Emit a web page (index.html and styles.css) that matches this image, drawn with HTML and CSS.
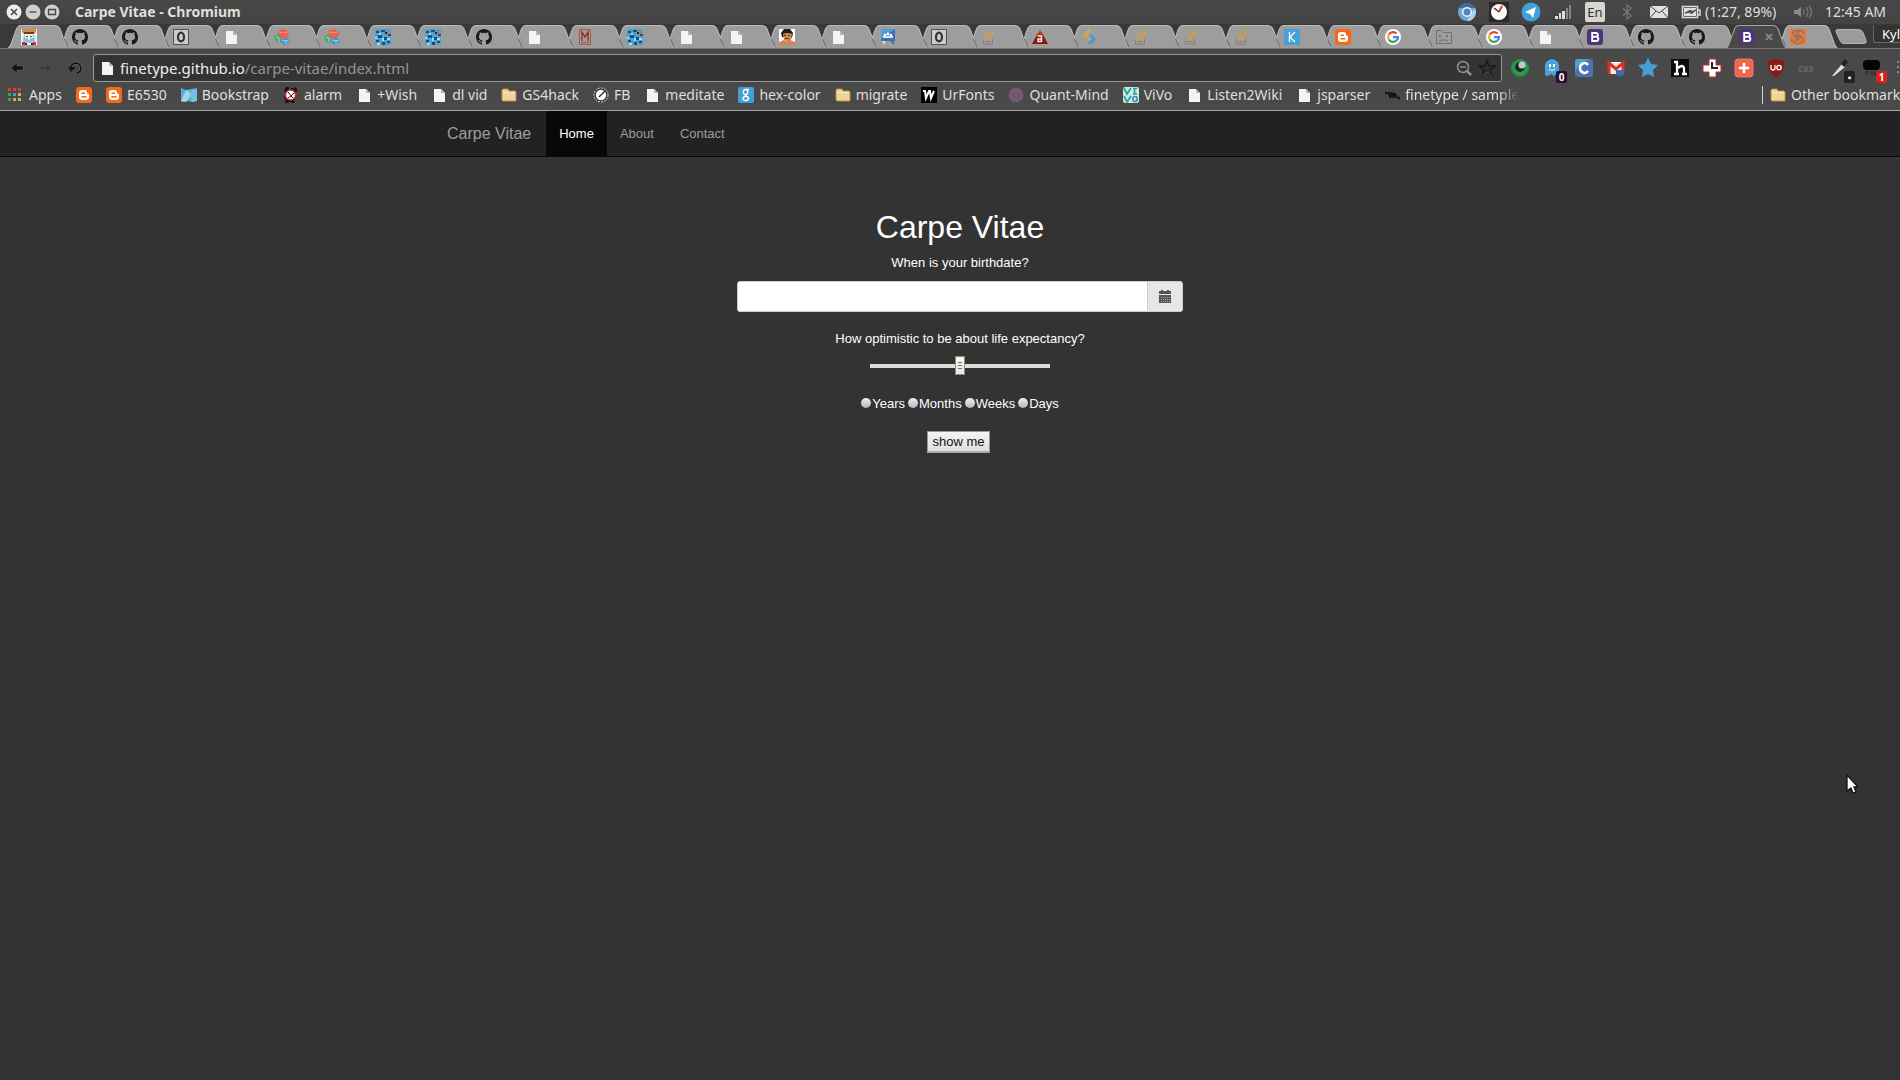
FILE: index.html
```html
<!DOCTYPE html>
<html lang="en">
<head>
<meta charset="utf-8">
<title>Carpe Vitae</title>
<link rel="stylesheet" href="styles.css">
</head>
<body>
<svg class="sprite" aria-hidden="true">
  <defs>
    <linearGradient id="orange-red" x1="0" y1="0" x2="0" y2="1"><stop offset="0" stop-color="#f0701c"/><stop offset=".5" stop-color="#8e1410"/></linearGradient>
    <radialGradient id="green-ball"><stop offset=".4" stop-color="#37a35b"/><stop offset="1" stop-color="#1f8c46"/></radialGradient>
  </defs>
  <symbol id="shape-first" viewBox="0 0 60 23" preserveAspectRatio="none"><path d="M0 23C2 22 2 21 3 19L8 5C9 2 10 .5 13 .5H46C49 .5 51 2 52 5L57 19C58 21 58 22 60 23Z" fill="#9d9d9d"/><path d="M0 23C2 22 2 21 3 19L8 5C9 2 10 .5 13 .5H46C49 .5 51 2 52 5L57 19C58 21 58 22 60 23" fill="none" stroke="#bbb"/></symbol>
  <symbol id="shape" viewBox="0 0 60 23" preserveAspectRatio="none"><path d="M9 23L5 14L8 5C9 2 10 .5 13 .5H46C49 .5 51 2 52 5L57 19C58 21 58 22 60 23Z" fill="#9d9d9d"/><path d="M9 22L4.500 12" stroke="#707070" fill="none"/><path d="M5 14L8 5C9 2 10 .5 13 .5H46C49 .5 51 2 52 5L57 19C58 21 58 22 60 23" fill="none" stroke="#bbb"/></symbol>
  <symbol id="shape-on" viewBox="0 0 60 23" preserveAspectRatio="none"><path d="M-1 24C2 22 2 21 3 19L8 5C9 2 10 .5 13 .5H46C49 .5 51 2 52 5L57 19C58 21 58 22 60 24Z" fill="#494949"/><path d="M0 23C2 22 2 21 3 19L8 5C9 2 10 .5 13 .5H46C49 .5 51 2 52 5L57 19C58 21 58 22 60 23" fill="none" stroke="#a5a5a5"/></symbol>

  <symbol id="king" viewBox="0 0 16 16"><path d="M0 0h16v16H0z" fill="#e9eef0"/><path d="M1 0h14v3l-2 2H3L1 3z" fill="#c99148"/><path d="M3 3h10v2H3z" fill="#7c3b17"/><path d="M3 6h10l1 6-3 2H5l-3-2z" fill="#8fbedb"/><path d="M4 6h8v3H9v2H7V9H4z" fill="#f3f0ec"/><path d="M5 7h2v1H5zM9 7h2v1H9z" fill="#555"/><path d="M1 13h3v3H1zM12 13h3v3h-3z" fill="#d0301c"/><path d="M4 14h2v2H4zM10 14h2v2h-2z" fill="#352a20"/></symbol>
  <symbol id="github" viewBox="0 0 16 16"><path fill="#191919" d="M8 0C3.58 0 0 3.58 0 8c0 3.54 2.29 6.53 5.47 7.59.4.07.55-.17.55-.38 0-.19-.01-.82-.01-1.49-2.01.37-2.53-.49-2.69-.94-.09-.23-.48-.94-.82-1.13-.28-.15-.68-.52-.01-.53.63-.01 1.08.58 1.23.82.72 1.21 1.87.87 2.33.66.07-.52.28-.87.51-1.07-1.78-.2-3.64-.89-3.64-3.95 0-.87.31-1.59.82-2.15-.08-.2-.36-1.02.08-2.12 0 0 .67-.21 2.2.82a7.6 7.6 0 0 1 4 0c1.53-1.04 2.2-.82 2.2-.82.44 1.1.16 1.92.08 2.12.51.56.82 1.27.82 2.15 0 3.07-1.87 3.75-3.65 3.95.29.25.54.73.54 1.48 0 1.07-.01 1.93-.01 2.2 0 .21.15.46.55.38A8.01 8.01 0 0 0 16 8c0-4.42-3.58-8-8-8z"/></symbol>
  <symbol id="zero" viewBox="0 0 16 16"><path d="M.5.5h15v15H.5z" fill="#ccc" stroke="#505050"/><ellipse cx="8" cy="8" rx="3" ry="4.3" fill="none" stroke="#333" stroke-width="2.2"/></symbol>
  <symbol id="page" viewBox="0 0 16 16"><path d="M3 2h7l4 4v9H3z" fill="#f4f4f4"/><path d="M10 2v4h4z" fill="#b5b5b5"/></symbol>
  <symbol id="cubes" viewBox="0 0 16 16"><path d="M0 7l4-2 3 3v6l-5-1z" fill="#4aa86c"/><path d="M2 8l3 1v4" fill="none" stroke="#a8dcb8"/><path d="M7 10l5-2 4 3-1 3-5 2-3-3z" fill="#4795d4"/><path d="M8 11l4 1 3-1M12 12v3" fill="none" stroke="#a8d0f0"/><path d="M4 2l6-2 5 3-1 5-5 2-4-3z" fill="#e8604f"/><path d="M5 3l5 1 4-1" fill="none" stroke="#f5a090" stroke-width=".8"/></symbol>
  <symbol id="mosaic" viewBox="0 0 16 16"><path d="M0 0h16v16H0z" fill="#4ba3d3"/><path d="M1 2h3v2H1zM6 1h4v2H6zM3 6h4v3H3zM9 8h3v3H9zM13 5h3v2h-3zM1 11h3v2H1zM7 13h3v3H7zM12 12h3v2h-3z" fill="#1c4f7d"/><path d="M4 4h2v2H4zM0 8h2v2H0zM7 9h2v3H7zM2 14h3v2H2zM12 9h3v2h-3z" fill="#a3dceb"/><path d="M12 2h2v3h-2z" fill="#ef6a1b"/><path d="M10 3h2v2h-2z" fill="#222"/></symbol>
  <symbol id="m-red" viewBox="0 0 16 16"><path d="M2.500.5h11v15h-11zM4 13.500h8" fill="none" stroke="#b5533f"/><path d="M5 12V3l3 5 3-5v9" fill="none" stroke="#9b2417" stroke-width="1.3"/></symbol>
  <symbol id="face" viewBox="0 0 16 16"><path d="M0 0h16v16H0z" fill="#fff"/><path d="M3 8L2 4l3-4h6l3 4-1 5z" fill="#231b18"/><path d="M4 5l3-1h3l3 1-1 6-3 2-4-2z" fill="#c98a4d"/><path d="M5 6h2v1H5zM9 6h2v1H9zM6 9h4v1H6z" fill="#60331a"/><path d="M0 16v-3l5-2 3 2 3-2 5 2v3z" fill="#dd7e4d"/></symbol>
  <symbol id="forum" viewBox="0 0 16 16"><path d="M1 0h14v12h-1v4l-4-4H5l-2 3v-3H1z" fill="#3a70b5"/><path d="M1 0h14L1 10z" fill="#4f9fd5"/><circle cx="5" cy="6" r="1.300" fill="#fff"/><circle cx="8" cy="5" r="1.500" fill="#fff"/><circle cx="11" cy="6" r="1.300" fill="#fff"/><path d="M3 7h10v2H3z" fill="#d7ebf5"/><path d="M2 12h4l-2 4z" fill="#e7d8c2"/></symbol>
  <symbol id="stack" viewBox="0 0 16 16"><path d="M2.500 10v5h9v-5M4.500 12.500h5" fill="none" stroke="#818181"/><path d="M4 10l5 1M4.500 7l5 2.500M6 4l4 4M9 1l2 6M12 0v6" stroke="#d69a4b" stroke-width="1.400"/></symbol>
  <symbol id="tri-a" viewBox="0 0 16 16"><path d="M8 0l8 15H0z" fill="url(#orange-red)"/><path d="M5.500 7h4v6M9.500 10h-3.500v2.500h3.500" fill="none" stroke="#eee" stroke-width="1.500"/></symbol>
  <symbol id="arrows" viewBox="0 0 16 16"><path d="M8 1L3 6l5 4" fill="none" stroke="#d6a258" stroke-width="3"/><path d="M8 6l4 4-5 5" fill="none" stroke="#419dd5" stroke-width="3"/></symbol>
  <symbol id="k" viewBox="0 0 16 16"><path d="M0 0h16v16H0z" fill="#46a1d5"/><path d="M5.500 3v10M11 3L6 8l5 5" fill="none" stroke="#fff" stroke-width="1.300"/></symbol>
  <symbol id="blogger" viewBox="0 0 16 16"><rect width="16" height="16" rx="3" fill="#f66a16"/><path d="M6 3h2.500c2 0 2.500 1 2.500 3 0 1 2 .2 2 1.500V10c0 2-1 3-3 3H6c-2 0-3-1-3-3V6c0-2 1-3 3-3z" fill="#fff"/><path d="M6 6.200h2.500M6 9.800h4" stroke="#f66a16" stroke-width="1.400" stroke-linecap="round"/></symbol>
  <symbol id="google" viewBox="0 0 16 16"><circle cx="8" cy="8" r="8" fill="#fff"/><g fill="none" stroke-width="2.200"><path d="M3.800 5.500A5 5 0 0 1 11.500 4.500" stroke="#e8412f"/><path d="M3.800 5.500a5 5 0 0 0 0 5" stroke="#f0b411"/><path d="M3.800 10.500a5 5 0 0 0 7.500 1.200" stroke="#34a353"/><path d="M11.300 11.700A4.500 4.500 0 0 0 13 8.200H8" stroke="#4285e4"/></g></symbol>
  <symbol id="sad" viewBox="0 0 16 16"><path d="M.5 14.500v-13h5l2 2h8v11zM3 6l2 2M5 6L3 8M10 6l2 2M12 6l-2 2M3 12.500l2-1.500h5l2 1.500" fill="none" stroke="#707070"/></symbol>
  <symbol id="bootstrap" viewBox="0 0 16 16"><rect width="16" height="16" rx="3" fill="#4d3578"/><path d="M5.200 4H9c2.600 0 2.400 3.600 0 3.800H5.200H9.300c2.700 0 2.700 4.200 0 4.200H5.200z" fill="none" stroke="#fff" stroke-width="1.900"/></symbol>
  <symbol id="swirl" viewBox="0 0 16 16"><path d="M0 0h16v16H0z" fill="#eb7836"/><path d="M8 8c-4-5 3-8 6-4M8 8c6-2 7 5 3 6M8 8c1 6-6 6-7 2M8 8c-5 0-6-4-3-6M5 8c1-3 6-2 6 0s-5 4-6 0M2 4c3-4 9-4 12 1M14 10c-3 6-9 6-12 2" fill="none" stroke="#8d7562" stroke-width="1.200"/></symbol>

  <symbol id="apps" viewBox="0 0 16 16"><path d="M0 1h3v3H0zM5 1h3v3H5zM10 1h3v3h-3z" fill="#e23a2f"/><path d="M0 6h3v3H0zM0 11h3v3H0z" fill="#35a15a"/><path d="M5 6h3v3H5z" fill="#4a9bd5"/><path d="M10 6h3v3h-3zM5 11h3v3H5zM10 11h3v3h-3z" fill="#dca852"/></symbol>
  <symbol id="map" viewBox="0 0 16 16"><path d="M0 1l5 2 5-1 6-1v13l-5 1-4-1-7 1z" fill="#55aedc"/><path d="M5 3l6 4-6 8-5-1z" fill="#a6d4e9"/><path d="M9 7l3-5 4 2v10l-5 1z" fill="#77bfe2"/></symbol>
  <symbol id="alarm" viewBox="0 0 16 16"><path d="M3 0h3v2h2v-1h2v1l2-2 2 2v2l-2 2 1 4-2 4 1 2h-2l-3-1-3 1H2l1-2-2-4 2-4-2-2z" fill="#111"/><circle cx="7.500" cy="8" r="5" fill="#fff" stroke="#d83530" stroke-width="1.500"/><path d="M5 5l3 4 3-3M5 11l3-2 2 2" stroke="#222" fill="none"/></symbol>
  <symbol id="folder" viewBox="0 0 16 16"><path d="M1 3l1-1h5l1 2h6l1 1v9H2L1 13z" fill="#ecd59f" stroke="#c98a3f"/><path d="M2 5.500h12" stroke="#f7e9c6"/></symbol>
  <symbol id="dial" viewBox="0 0 16 16"><circle cx="8" cy="8" r="7" fill="#333" stroke="#ddd" stroke-dasharray="2 1"/><circle cx="8" cy="8" r="5.200" fill="#fff"/><path d="M6 10l6-6" stroke="#333" stroke-width="1.500"/></symbol>
  <symbol id="g-old" viewBox="0 0 16 16"><rect width="16" height="16" rx="2" fill="#459fd5"/><g fill="none" stroke="#fff" stroke-width="1.300"><ellipse cx="7.500" cy="5" rx="2.300" ry="2.500"/><path d="M8 2.500h3M8 7.500c-2 1 1 1.500 1.500 2.500"/><ellipse cx="7.800" cy="11.500" rx="2.800" ry="2"/></g></symbol>
  <symbol id="w" viewBox="0 0 16 16"><path d="M0 0h16v16H0z" fill="#000"/><path d="M2 4h2l1 7 3-7h1l1 7 3-7" fill="none" stroke="#fff" stroke-width="2"/></symbol>
  <symbol id="burst" viewBox="0 0 16 16"><circle cx="8" cy="8" r="6.800" fill="#795b70" stroke="#795b70" stroke-width="1.500" stroke-dasharray="2 1"/><circle cx="8" cy="8" r="3" fill="none" stroke="#69505f"/></symbol>
  <symbol id="vivo" viewBox="0 0 16 16"><rect width="16" height="16" rx="2" fill="#c9efcf"/><path d="M1 1l3 6 4-6M11.500 1v6M10 1.500h4M10 7h4M1 9l3 6 4-6" fill="none" stroke="#3393bd" stroke-width="1.700"/><ellipse cx="12" cy="12" rx="2.200" ry="2.500" fill="none" stroke="#3393bd" stroke-width="1.700"/></symbol>
  <symbol id="bolts" viewBox="0 0 16 16"><path d="M1 6h2M4 5l3 6M7 5l3 6M10 6l3 5M14 11h2" fill="none" stroke="#111" stroke-width="2.300"/></symbol>
</svg>

<header class="desktop">
  <div class="panel">
    <div class="controls">
      <button aria-label="Close"><svg viewBox="0 0 16 16"><circle cx="8" cy="8" r="7.500" fill="#ececec"/><path d="M5 5l6 6M11 5l-6 6" stroke="#444" stroke-width="1.500"/></svg></button>
      <button aria-label="Minimize"><svg viewBox="0 0 16 16"><circle cx="8" cy="8" r="7.500" fill="#cfcfcb"/><path d="M4.500 8h7" stroke="#444" stroke-width="1.300"/></svg></button>
      <button aria-label="Maximize"><svg viewBox="0 0 16 16"><circle cx="8" cy="8" r="7.500" fill="#cfcfcb"/><path d="M4.500 5.500h7v5h-7z" fill="none" stroke="#444" stroke-width="1.300"/></svg></button>
    </div>
    <strong class="window-title">Carpe Vitae - Chromium</strong>
    <div class="tray">
      <svg viewBox="0 0 20 20"><circle cx="10" cy="10" r="9" fill="#6ea7d8"/><path d="M2 6a9 9 0 0 1 16 0h-8z" fill="#426aa2"/><path d="M10 19l4-7 4-6c3 7-2 13-8 13z" fill="#a7d3ee"/><circle cx="10" cy="10" r="4.300" fill="#4b86c8" stroke="#eef5fa" stroke-width="1.500"/></svg>
      <svg viewBox="0 0 20 20"><rect x="-1" y="-1" width="22" height="22" rx="4" fill="#292929"/><circle cx="10" cy="10" r="8" fill="#fafafa"/><path d="M10 10L5 6" stroke="#333" stroke-width="1.500"/><path d="M10 10l3-6" stroke="#d52a22" stroke-width="1.700"/></svg>
      <svg viewBox="0 0 20 20"><circle cx="10" cy="10" r="9.500" fill="#429fd7"/><path d="M4 10l11-5-3 11-3-4z" fill="#fff"/></svg>
      <svg viewBox="0 0 20 20"><path d="M2 14h3v3H2zM6 11h2v6H6zM9 9h3v8H9z" fill="#dedede"/><path d="M13 6h2v11h-2zM16 3h2v14h-2z" fill="#868686"/></svg>
      <span class="lang">En</span>
      <svg viewBox="0 0 20 20"><path d="M6 6l8 8-4 3V3l4 3-8 8" fill="none" stroke="#797979" stroke-width="1.200"/></svg>
      <svg viewBox="0 0 20 20"><path d="M1 4h18v12H1z" fill="#e3e1dd"/><path d="M1 4l9 7 9-7M1 16l6-7M19 16l-6-7" fill="none" stroke="#444"/></svg>
      <svg viewBox="0 0 20 20"><path d="M1.500 4.500h15v11h-15zM17 8h2v5h-2" fill="none" stroke="#deddd9" stroke-width="1.500"/><path d="M3 6h12v8H3z" fill="#deddd9"/><path d="M4 11l6-3v2l5-2-5 4v-2z" fill="#444" stroke="#444"/></svg>
      <span class="battery">(1:27, 89%)</span>
      <svg viewBox="0 0 20 20"><path d="M1 8h3l4-3v10l-4-3H1z" fill="#898989"/><path d="M10 7q2 3 0 6M13 5q4 5 0 10M16 4q5 6 0 12" fill="none" stroke="#777" stroke-width="1.300"/></svg>
      <time class="clock">12:45 AM</time>
      <svg viewBox="0 0 20 20"><circle cx="10" cy="10" r="6" fill="none" stroke="#ddd" stroke-width="3"/></svg>
    </div>
  </div>

  <div class="tabstrip">
    <div class="tabs" role="tablist">
      <button class="tab" role="tab"><svg class="shape"><use href="#shape-first"/></svg><svg class="ico"><use href="#king"/></svg></button>
      <button class="tab" role="tab"><svg class="shape"><use href="#shape"/></svg><svg class="ico"><use href="#github"/></svg></button>
      <button class="tab" role="tab"><svg class="shape"><use href="#shape"/></svg><svg class="ico"><use href="#github"/></svg></button>
      <button class="tab" role="tab"><svg class="shape"><use href="#shape"/></svg><svg class="ico"><use href="#zero"/></svg></button>
      <button class="tab" role="tab"><svg class="shape"><use href="#shape"/></svg><svg class="ico"><use href="#page"/></svg></button>
      <button class="tab" role="tab"><svg class="shape"><use href="#shape"/></svg><svg class="ico"><use href="#cubes"/></svg></button>
      <button class="tab" role="tab"><svg class="shape"><use href="#shape"/></svg><svg class="ico"><use href="#cubes"/></svg></button>
      <button class="tab" role="tab"><svg class="shape"><use href="#shape"/></svg><svg class="ico"><use href="#mosaic"/></svg></button>
      <button class="tab" role="tab"><svg class="shape"><use href="#shape"/></svg><svg class="ico"><use href="#mosaic"/></svg></button>
      <button class="tab" role="tab"><svg class="shape"><use href="#shape"/></svg><svg class="ico"><use href="#github"/></svg></button>
      <button class="tab" role="tab"><svg class="shape"><use href="#shape"/></svg><svg class="ico"><use href="#page"/></svg></button>
      <button class="tab" role="tab"><svg class="shape"><use href="#shape"/></svg><svg class="ico"><use href="#m-red"/></svg></button>
      <button class="tab" role="tab"><svg class="shape"><use href="#shape"/></svg><svg class="ico"><use href="#mosaic"/></svg></button>
      <button class="tab" role="tab"><svg class="shape"><use href="#shape"/></svg><svg class="ico"><use href="#page"/></svg></button>
      <button class="tab" role="tab"><svg class="shape"><use href="#shape"/></svg><svg class="ico"><use href="#page"/></svg></button>
      <button class="tab" role="tab"><svg class="shape"><use href="#shape"/></svg><svg class="ico"><use href="#face"/></svg></button>
      <button class="tab" role="tab"><svg class="shape"><use href="#shape"/></svg><svg class="ico"><use href="#page"/></svg></button>
      <button class="tab" role="tab"><svg class="shape"><use href="#shape"/></svg><svg class="ico"><use href="#forum"/></svg></button>
      <button class="tab" role="tab"><svg class="shape"><use href="#shape"/></svg><svg class="ico"><use href="#zero"/></svg></button>
      <button class="tab" role="tab"><svg class="shape"><use href="#shape"/></svg><svg class="ico"><use href="#stack"/></svg></button>
      <button class="tab" role="tab"><svg class="shape"><use href="#shape"/></svg><svg class="ico"><use href="#tri-a"/></svg></button>
      <button class="tab" role="tab"><svg class="shape"><use href="#shape"/></svg><svg class="ico"><use href="#arrows"/></svg></button>
      <button class="tab" role="tab"><svg class="shape"><use href="#shape"/></svg><svg class="ico"><use href="#stack"/></svg></button>
      <button class="tab" role="tab"><svg class="shape"><use href="#shape"/></svg><svg class="ico"><use href="#stack"/></svg></button>
      <button class="tab" role="tab"><svg class="shape"><use href="#shape"/></svg><svg class="ico"><use href="#stack"/></svg></button>
      <button class="tab" role="tab"><svg class="shape"><use href="#shape"/></svg><svg class="ico"><use href="#k"/></svg></button>
      <button class="tab" role="tab"><svg class="shape"><use href="#shape"/></svg><svg class="ico"><use href="#blogger"/></svg></button>
      <button class="tab" role="tab"><svg class="shape"><use href="#shape"/></svg><svg class="ico"><use href="#google"/></svg></button>
      <button class="tab" role="tab"><svg class="shape"><use href="#shape"/></svg><svg class="ico"><use href="#sad"/></svg></button>
      <button class="tab" role="tab"><svg class="shape"><use href="#shape"/></svg><svg class="ico"><use href="#google"/></svg></button>
      <button class="tab" role="tab"><svg class="shape"><use href="#shape"/></svg><svg class="ico"><use href="#page"/></svg></button>
      <button class="tab" role="tab"><svg class="shape"><use href="#shape"/></svg><svg class="ico"><use href="#bootstrap"/></svg></button>
      <button class="tab" role="tab"><svg class="shape"><use href="#shape"/></svg><svg class="ico"><use href="#github"/></svg></button>
      <button class="tab" role="tab"><svg class="shape"><use href="#shape"/></svg><svg class="ico"><use href="#github"/></svg></button>
      <button class="tab current" role="tab" aria-selected="true"><svg class="shape"><use href="#shape-on"/></svg><svg class="ico"><use href="#bootstrap"/></svg><svg class="close" viewBox="0 0 8 8"><path d="M1 1l6 6M7 1L1 7" stroke="#858585" stroke-width="2"/></svg></button>
      <button class="tab" role="tab"><svg class="shape"><use href="#shape"/></svg><svg class="ico"><use href="#swirl"/></svg></button>
    </div>
    <button class="new-tab" aria-label="New tab"><svg viewBox="0 0 32 15"><path d="M3 .5h20q4 0 5 3l3 8q1 3-2 3H9q-3 0-4-3L1 3Q0 .5 3 .5z" fill="#9b9b9b" stroke="#b5b5b5"/></svg></button>
    <button class="profile">Kyle</button>
  </div>

  <div class="toolbar">
    <button aria-label="Back"><svg viewBox="0 0 16 16"><path d="M2 8l6-5v3h6v4H8v3z" fill="#101010" stroke="#6b6b6b" stroke-width=".5"/></svg></button>
    <button aria-label="Forward"><svg viewBox="0 0 16 16"><path d="M14 8L8 3v3H2v4h6v3z" fill="#3b3b3b" stroke="#5b5b5b" stroke-width=".5"/></svg></button>
    <button aria-label="Reload"><svg viewBox="0 0 16 16"><path d="M4 9a5 5 0 1 1 6 4" fill="none" stroke="#777" stroke-width="3"/><path d="M4 9a5 5 0 1 1 6 4" fill="none" stroke="#161616" stroke-width="2"/><path d="M1 7h8l-5 5z" fill="#161616"/></svg></button>
    <div class="address">
      <svg class="ico"><use href="#page"/></svg>
      <span class="url" role="textbox" aria-label="Address">finetype.github.io<span>/carpe-vitae/index.html</span></span>
      <svg viewBox="0 0 18 18"><circle cx="8" cy="8" r="5.500" fill="none" stroke="#919191" stroke-width="1.500"/><path d="M5 8h6" stroke="#919191" stroke-width="1.500"/><path d="M12 12l4 4" stroke="#919191" stroke-width="2.500"/></svg>
      <svg viewBox="0 0 18 18"><path d="M9 1l2 6h6l-5 4 2 6-5-4-5 4 2-6-5-4h6z" fill="#303030" stroke="#191919" stroke-width="1.300"/><path d="M4 17l5-4 5 4" fill="none" stroke="#6a6a6a" stroke-width=".7"/></svg>
    </div>
    <div class="extensions">
      <svg viewBox="0 0 20 20"><circle cx="10" cy="10" r="9" fill="url(#green-ball)"/><circle cx="10" cy="9" r="5" fill="#252525"/><circle cx="12" cy="7" r="3.500" fill="#c4c9c5"/></svg>
      <span class="badged"><svg viewBox="0 0 20 20"><path d="M3 17V8c0-9 14-9 14 0v9l-3-1-2 2-3-2-3 2z" fill="#4ca3d8"/><path d="M7 6h2v3H7zM11 6h2v3h-2z" fill="#fff"/><path d="M7 11q3 3 6 0" fill="none" stroke="#fff"/></svg><b class="badge purple">0</b></span>
      <svg viewBox="0 0 20 20"><rect x="1" y="1" width="18" height="18" rx="3" fill="#4c72b5"/><path d="M1 14V4q0-3 3-3h12Q4 5 1 14z" fill="#539ed3"/><path d="M14 7c-3-4-8-1-8 3s5 7 8 3" fill="none" stroke="#fff" stroke-width="2.500"/></svg>
      <svg viewBox="0 0 20 20"><path d="M2 4h16v12H2z" fill="#eee"/><path d="M3 16V5l7 6 7-6v11" fill="none" stroke="#dd3023" stroke-width="3"/><path d="M10 12h8v3q0 3-3 3l-2 1-1-1q-2-1-2-3z" fill="#3e69b4"/></svg>
      <svg viewBox="0 0 20 20"><path d="M10 0l3 6 7 1-5 5 1 7-6-3-6 3 1-7-5-5 7-1z" fill="#45a0d5"/></svg>
      <svg viewBox="0 0 20 20"><path d="M1 1h18v18H1z" fill="#0a0a0a"/><path d="M4 4h3v12M4 16h5M8 10q5-4 6 0v6M12 16h5" fill="none" stroke="#fff" stroke-width="2.300"/></svg>
      <svg viewBox="0 0 20 20"><path d="M7 1h7v6h5v7h-5v5H7v-5H1V7h6z" fill="#fff" stroke="#bd2e25"/><path d="M10 4v6h6" fill="none" stroke="#222" stroke-width="2"/></svg>
      <svg viewBox="0 0 20 20"><rect x="1" y="1" width="18" height="18" rx="3" fill="#f26551" stroke="#e5815d"/><path d="M10 5v10M5 10h10" stroke="#fff" stroke-width="2.500"/></svg>
      <svg viewBox="0 0 20 20"><path d="M10 1q4 2 8 2c0 9-1 12-8 16C3 15 2 12 2 3q4 0 8-2z" fill="#8e1717"/><path d="M5 7v3q0 2 2 2t2-2V7" fill="none" stroke="#fff" stroke-width="1.300"/><circle cx="13" cy="9.500" r="2.200" fill="none" stroke="#fff" stroke-width="1.300"/></svg>
      <i class="css">css</i>
      <span class="badged"><svg viewBox="0 0 20 20"><path d="M2 18L12 6l3 3L4 18z" fill="#ddd"/><path d="M11 6l4-5 3 3-4 5z" fill="#222"/></svg><b class="badge dark">▪</b></span>
      <span class="badged"><svg viewBox="0 0 20 20"><rect x="1" y="2" width="17" height="10" rx="4" fill="#050505"/><path d="M3 13h4v4H3zM9 13h6v5H9z" fill="#393939"/></svg><b class="badge red">1</b></span>
      <svg viewBox="0 0 20 20"><path d="M3 4h16M3 9h16M3 14h16" stroke="#8c8c8c" stroke-width="2" stroke-dasharray="2 1"/></svg>
    </div>
  </div>

  <nav class="bookmarks" aria-label="Bookmarks">
    <a href="#"><svg class="ico"><use href="#apps"/></svg>Apps</a>
    <a href="#" aria-label="Blogger"><svg class="ico"><use href="#blogger"/></svg></a>
    <a href="#"><svg class="ico"><use href="#blogger"/></svg>E6530</a>
    <a href="#"><svg class="ico"><use href="#map"/></svg>Bookstrap</a>
    <a href="#"><svg class="ico"><use href="#alarm"/></svg>alarm</a>
    <a href="#"><svg class="ico"><use href="#page"/></svg>+Wish</a>
    <a href="#"><svg class="ico"><use href="#page"/></svg>dl vid</a>
    <a href="#"><svg class="ico"><use href="#folder"/></svg>GS4hack</a>
    <a href="#"><svg class="ico"><use href="#dial"/></svg>FB</a>
    <a href="#"><svg class="ico"><use href="#page"/></svg>meditate</a>
    <a href="#"><svg class="ico"><use href="#g-old"/></svg>hex-color</a>
    <a href="#"><svg class="ico"><use href="#folder"/></svg>migrate</a>
    <a href="#"><svg class="ico"><use href="#w"/></svg>UrFonts</a>
    <a href="#"><svg class="ico"><use href="#burst"/></svg>Quant-Mind</a>
    <a href="#"><svg class="ico"><use href="#vivo"/></svg>ViVo</a>
    <a href="#"><svg class="ico"><use href="#page"/></svg>Listen2Wiki</a>
    <a href="#"><svg class="ico"><use href="#page"/></svg>jsparser</a>
    <a href="#" class="fade"><svg class="ico"><use href="#bolts"/></svg>finetype / sample</a>
    <a href="#" class="other"><svg class="ico"><use href="#folder"/></svg>Other bookmarks</a>
  </nav>
</header>

<div class="site">
  <nav class="navbar">
    <div class="container">
      <a class="brand" href="#">Carpe Vitae</a>
      <a class="active" href="#">Home</a>
      <a href="#about">About</a>
      <a href="#contact">Contact</a>
    </div>
  </nav>
  <main>
    <form>
      <h1>Carpe Vitae</h1>
      <label for="birthdate">When is your birthdate?</label>
      <div class="input-group">
        <input id="birthdate" type="text">
        <button type="button" aria-label="Pick a date"><svg viewBox="0 0 12 13"><path d="M0 1h2V0h2v1h4V0h2v1h2v3H0zM0 5h12v8H0z" fill="#555"/><path d="M2 7.500h9M2 9.500h9M2 11.500h9" stroke="#bbb" stroke-width=".8" stroke-dasharray="1 1"/></svg></button>
      </div>
      <label for="optimism">How optimistic to be about life expectancy?</label>
      <input id="optimism" type="range">
      <div class="units">
        <label><input type="radio" name="unit">Years</label>
        <label><input type="radio" name="unit">Months</label>
        <label><input type="radio" name="unit">Weeks</label>
        <label><input type="radio" name="unit">Days</label>
      </div>
      <button class="submit" type="button">show me</button>
    </form>
  </main>
</div>
<svg class="pointer" viewBox="0 0 12 20"><path d="M1 1v16l4-3 2 5 3-1-2-5h4z" fill="#fff" stroke="#111" stroke-width="1.300"/></svg>
</body>
</html>
```
FILE: styles.css
```css
* { box-sizing: border-box; }
body {
  margin: 0;
  min-height: 100vh;
  background: #333;
  color: #fff;
  font: 13px/18px "Liberation Sans", Arial, sans-serif;
  overflow-x: hidden;
}
button { border: 0; padding: 0; background: none; font: inherit; color: inherit; }
svg { display: block; flex: none; }
a { color: inherit; text-decoration: none; }
.sprite { position: absolute; width: 0; height: 0; }
.ico { width: 16px; height: 16px; }

/* Desktop panel and browser chrome */
.desktop { font-family: "Noto Sans", sans-serif; color: #e0dfdb; background: #494949; border-bottom: 1px solid #a3a3a3; overflow: hidden; }
.panel { display: flex; align-items: center; height: 24px; padding-left: 6px; background: linear-gradient(#484848, #434343); }
.controls { display: flex; gap: 3px; }
.controls svg { width: 16px; height: 16px; }
.window-title { margin-left: 15px; font-size: 14px; }
.tray { display: flex; align-items: center; gap: 12px; width: 443px; margin-left: auto; overflow: hidden; white-space: nowrap; font-size: 14px; }
.tray > * { flex: none; }
.tray svg { width: 20px; height: 20px; }
.lang { width: 20px; height: 20px; border-radius: 2px; background: #d6d5d0; color: #333; font-size: 13px; line-height: 20px; text-align: center; }
.battery { width: 76px; margin-left: -8px; }
.clock { width: 62px; }

.tabstrip { display: flex; height: 25px; padding: 1px 0 0 8px; background: #393939; border-bottom: 1px solid #777; }
.tabs { display: flex; flex: 1; min-width: 0; }
.tab { position: relative; flex: 1 1 0; min-width: 0; height: 23px; padding-left: 13px; display: flex; align-items: center; }
.shape { position: absolute; top: 0; left: 0; width: calc(100% + 10px); height: 23px; overflow: visible; }
.tab .ico, .close { position: relative; }
.close { width: 8px; height: 8px; margin-left: 10px; }
.current { z-index: 1; }
.new-tab { margin: 4px 0 0 8px; align-self: flex-start; }
.new-tab svg { width: 32px; height: 15px; }
.profile { flex: none; width: 27px; height: 18px; margin-left: 6px; padding-left: 8px; border: 1px solid #696969; border-width: 0 0 1px 1px; border-radius: 0 0 0 3px; background: #333; color: #fff; font-size: 13px; line-height: 18px; text-align: left; overflow: hidden; }

.toolbar { display: flex; align-items: center; gap: 13px; height: 37px; padding-left: 9px; }
.toolbar > button svg { width: 16px; height: 16px; }
.address { display: flex; flex: 1; align-items: center; gap: 5px; height: 28px; min-width: 0; margin-left: -3px; padding: 0 5px; border: 1px solid #999; border-radius: 3px; background: #333; font-size: 15px; line-height: 20px; }
.address svg:not(.ico) { width: 18px; height: 18px; }
.url { flex: 1; color: #eee; }
.url span { color: #959595; }
.extensions { display: flex; align-items: center; gap: 12px; width: 390px; margin-left: -5px; overflow: hidden; height: 37px; }
.extensions svg { width: 20px; height: 20px; }
.css { width: 20px; flex: none; color: #666; font-size: 11px; font-weight: bold; }
.badged { position: relative; }
.badge { position: absolute; right: -5px; bottom: -5px; width: 11px; height: 12px; border-radius: 2px; font-size: 10px; line-height: 12px; text-align: center; color: #fff; }
.purple { background: #2a0b36; }
.dark { background: #222; }
.red { background: #d8201c; }

.bookmarks { display: flex; align-items: center; gap: 14px; height: 24px; padding: 0 0 6px 8px; white-space: nowrap; font-size: 14px; line-height: 18px; }
.bookmarks a { display: flex; align-items: center; gap: 5px; flex: none; }
.fade { mask-image: linear-gradient(90deg, #000 85%, transparent); }
.bookmarks .other { width: 138px; margin-left: auto; padding-left: 7px; border-left: 1px solid #c5d3dc; }

/* Site */
.navbar { background: #222; border-bottom: 1px solid #080808; }
.container { display: flex; max-width: 1026px; margin: 0 auto; padding-left: 10px; }
.container a { padding: 13px; line-height: 19px; color: #9d9d9d; }
.container .brand { font-size: 16px; padding: 13px 15px 13px 0; }
.container .active { background: #080808; color: #fff; }
main { padding: 52px 0 0 20px; }
form { display: flex; flex-direction: column; align-items: center; max-width: 446px; margin: 0 auto; }
h1 { margin: 0 0 9px; font-size: 32px; line-height: 36px; font-weight: normal; }
.input-group { display: flex; width: 100%; height: 31px; margin: 9px 0 18px; border: 1px solid #ccc; border-radius: 3px; overflow: hidden; background: #fff; }
.input-group input { flex: 1; min-width: 0; border: 0; padding: 0 10px; font: inherit; }
.input-group button { display: grid; place-items: center; width: 35px; border-left: 1px solid #ccc; background: #e6e6e6; }
.input-group svg { width: 12px; height: 13px; }
#optimism { appearance: none; width: 180px; height: 20px; margin: 8px 0 19px; background: none; }
#optimism::-webkit-slider-runnable-track { height: 4px; background: #e2dcd8; }
#optimism::-webkit-slider-thumb { appearance: none; width: 10px; height: 19px; margin-top: -8px; border: 1px solid #8e8c80; background: linear-gradient(#77756c, #77756c) 50% 5px / 4px 1px no-repeat, linear-gradient(#77756c, #77756c) 50% 8px / 4px 1px no-repeat, linear-gradient(#77756c, #77756c) 50% 11px / 4px 1px no-repeat, linear-gradient(#fbf7ec, #e8e8e4); }
.units { display: flex; gap: 3px; }
.units label { display: flex; align-items: center; gap: 1px; }
.units input { appearance: none; width: 10px; height: 10px; margin: 0 0 2px; border-radius: 50%; background: linear-gradient(#eee, #b8b8b8); }
.submit { width: 63px; height: 22px; margin: 18px 3px 0 0; border: 1px solid #999; border-bottom: 2px solid #aaa; background: linear-gradient(#f4f4f4, #dedede); color: #111; }
.pointer { position: absolute; left: 1846px; top: 774px; width: 12px; height: 20px; }
```
